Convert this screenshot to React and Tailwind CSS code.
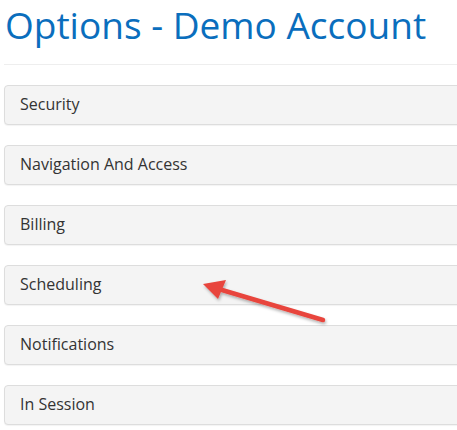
import React from "react";

const items = ["Security", "Navigation And Access", "Billing", "Scheduling", "Notifications", "In Session"];

export default function App() {
  return (
    <div className="relative w-[457px] h-[430px] overflow-hidden bg-white" style={{ fontFamily: '"Open Sans", sans-serif' }}>
      <div className="pl-[4px] w-[480px]">
        <h1 className="text-[37px] leading-[50px] text-[#0a6ebd] pl-[1px] font-normal">Options - Demo Account</h1>
        <div className="mt-[14px] border-t border-[#eeeeee]" />
        <div className="mt-[20px] flex flex-col gap-[20px]">
          {items.map((t) => (
            <div key={t} className="h-[40px] flex items-center pl-[15px] pb-[2px] bg-[#f4f4f4] border border-[#dddddd] rounded-[4px] shadow-[0_1px_1px_rgba(0,0,0,0.05)] text-[16px] text-[#333333]">
              {t}
            </div>
          ))}
        </div>
      </div>
      <svg className="absolute left-0 top-0" width="457" height="430" viewBox="0 0 457 430">
        <defs>
          <filter id="s" x="-20%" y="-50%" width="140%" height="200%">
            <feDropShadow dx="1" dy="2" stdDeviation="1.5" floodColor="#000" floodOpacity="0.3" />
          </filter>
        </defs>
        <g filter="url(#s)">
          <line x1="323" y1="320" x2="222" y2="290" stroke="#e8453c" strokeWidth="4.5" strokeLinecap="round" />
          <polygon points="203,284 226,280 218,299" fill="#e8453c" />
        </g>
      </svg>
    </div>
  );
}
